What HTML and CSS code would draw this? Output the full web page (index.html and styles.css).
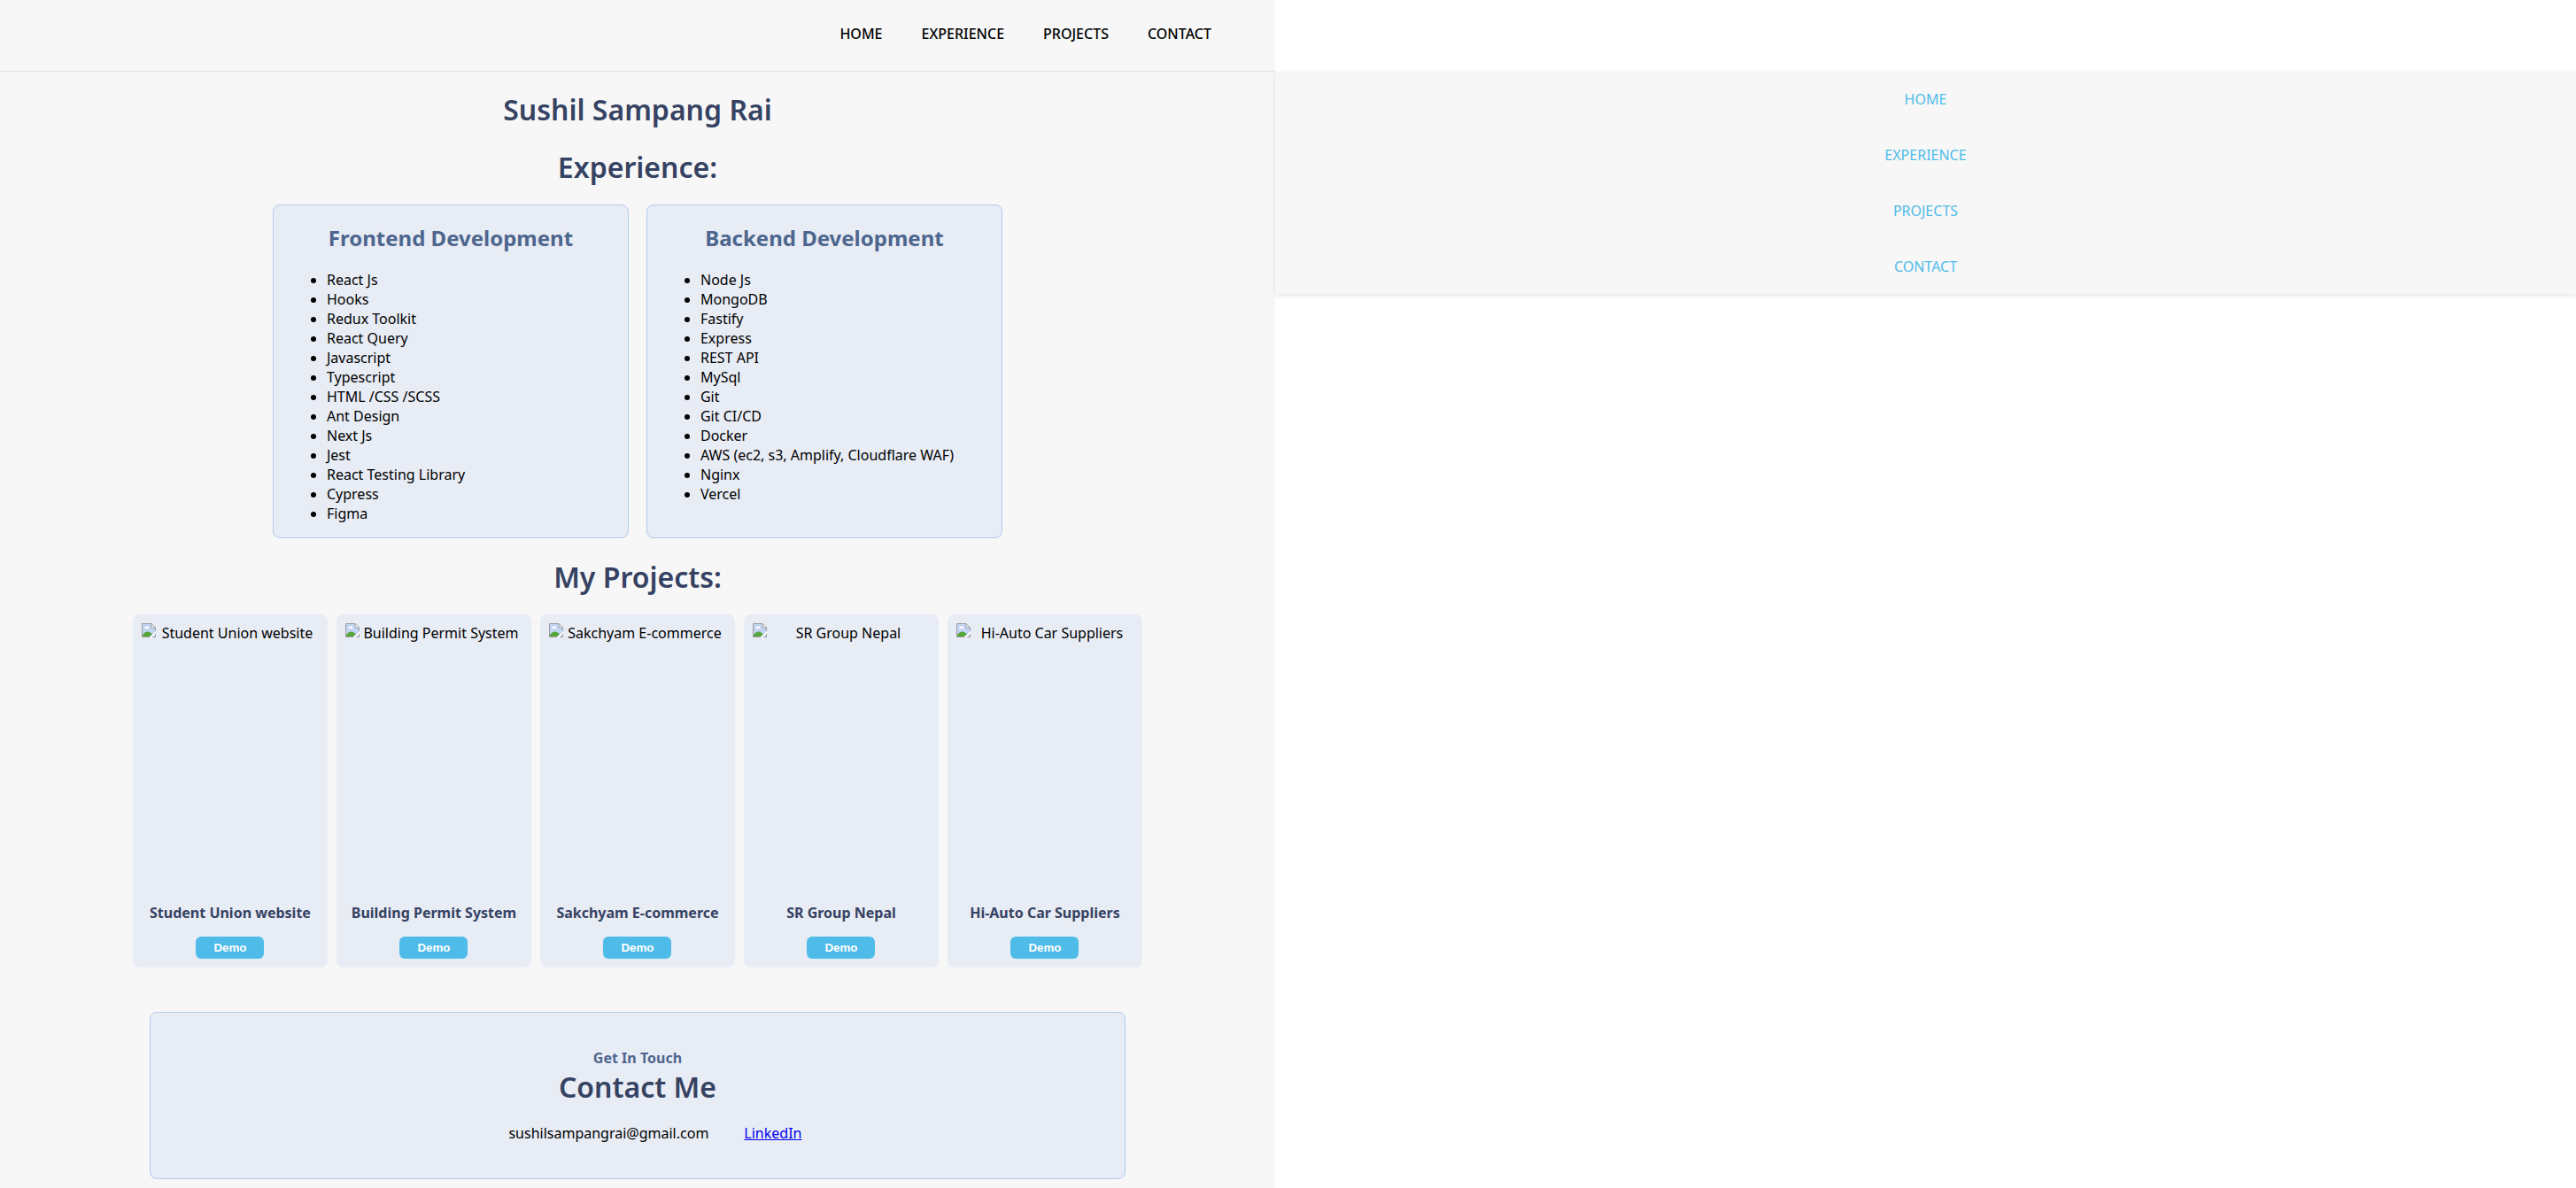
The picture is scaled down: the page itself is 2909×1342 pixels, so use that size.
FILE: index.html
```html
<!DOCTYPE html>
<html lang="en">
<head>
<meta charset="utf-8">
<meta name="viewport" content="width=device-width, initial-scale=1">
<title>Sushil Sampang Rai</title>
<link rel="stylesheet" href="styles.css">
</head>
<body>
<svg class="sprite" aria-hidden="true">
  <symbol id="missing" viewBox="0 0 16 16">
    <path d="M.5.5H11L15.500 5V15.500H.5Z" fill="#c3d5f5"/>
    <path d="M1 15V13.500C3 10 7 8.500 9.500 10.500L12 12 9 15Z" fill="#57a639"/>
    <path d="M3 6C3 4.700 4 4.300 4.700 4.300 5 2.900 7 3 7.300 4.300 8.300 4.300 8.700 5 8.700 6Z" fill="#fff"/>
    <path d="M11 .5V5H15.500Z" fill="#fff"/>
    <path d="M9 16 16 9V11.500L12 16Z" fill="#fff"/>
    <path d="M9 15.500H.5V.5H11L15.500 5V9M11 .5V5H15.500M15.500 12V15.500H12" fill="none" stroke="#9b9b9b"/>
  </symbol>
</svg>
<div class="layout">
  <div class="page">
    <header class="header">
      <nav aria-label="Main">
        <ul class="menu">
          <li><a href="#home">HOME</a></li>
          <li><a href="#experience">EXPERIENCE</a></li>
          <li><a href="#projects">PROJECTS</a></li>
          <li><a href="#contact">CONTACT</a></li>
        </ul>
      </nav>
    </header>
    <main>
      <h1 class="heading" id="home">Sushil Sampang Rai</h1>
      <section id="experience">
        <h2 class="heading">Experience:</h2>
        <div class="skills">
          <article class="skill-card">
            <h3>Frontend Development</h3>
            <ul>
              <li>React Js</li>
              <li>Hooks</li>
              <li>Redux Toolkit</li>
              <li>React Query</li>
              <li>Javascript</li>
              <li>Typescript</li>
              <li>HTML /CSS /SCSS</li>
              <li>Ant Design</li>
              <li>Next Js</li>
              <li>Jest</li>
              <li>React Testing Library</li>
              <li>Cypress</li>
              <li>Figma</li>
            </ul>
          </article>
          <article class="skill-card">
            <h3>Backend Development</h3>
            <ul>
              <li>Node Js</li>
              <li>MongoDB</li>
              <li>Fastify</li>
              <li>Express</li>
              <li>REST API</li>
              <li>MySql</li>
              <li>Git</li>
              <li>Git CI/CD</li>
              <li>Docker</li>
              <li>AWS (ec2, s3, Amplify, Cloudflare WAF)</li>
              <li>Nginx</li>
              <li>Vercel</li>
            </ul>
          </article>
        </div>
      </section>
      <section id="projects">
        <h2 class="heading">My Projects:</h2>
        <div class="projects">
          <article class="project">
            <div class="preview"><svg class="missing"><use href="#missing"/></svg><span>Student Union website</span></div>
            <h3>Student Union website</h3>
            <button type="button">Demo</button>
          </article>
          <article class="project">
            <div class="preview"><svg class="missing"><use href="#missing"/></svg><span>Building Permit System</span></div>
            <h3>Building Permit System</h3>
            <button type="button">Demo</button>
          </article>
          <article class="project">
            <div class="preview"><svg class="missing"><use href="#missing"/></svg><span>Sakchyam E-commerce</span></div>
            <h3>Sakchyam E-commerce</h3>
            <button type="button">Demo</button>
          </article>
          <article class="project">
            <div class="preview"><svg class="missing"><use href="#missing"/></svg><span>SR Group Nepal</span></div>
            <h3>SR Group Nepal</h3>
            <button type="button">Demo</button>
          </article>
          <article class="project">
            <div class="preview"><svg class="missing"><use href="#missing"/></svg><span>Hi-Auto Car Suppliers</span></div>
            <h3>Hi-Auto Car Suppliers</h3>
            <button type="button">Demo</button>
          </article>
        </div>
      </section>
      <section class="contact" id="contact">
        <p class="eyebrow">Get In Touch</p>
        <h2>Contact Me</h2>
        <ul class="contact-links">
          <li>sushilsampangrai@gmail.com</li>
          <li><a href="#linkedin">LinkedIn</a></li>
        </ul>
      </section>
    </main>
  </div>
  <nav class="drawer" aria-label="Side menu">
    <ul>
      <li><a href="#home">HOME</a></li>
      <li><a href="#experience">EXPERIENCE</a></li>
      <li><a href="#projects">PROJECTS</a></li>
      <li><a href="#contact">CONTACT</a></li>
    </ul>
  </nav>
</div>
</body>
</html>
```

FILE: styles.css
```css
* {
  box-sizing: border-box;
}

body {
  margin: 0;
  background: #fff;
  color: #000;
  font: 16px/22px "Noto Sans", sans-serif;
}

h1, h2, h3, p, ul {
  margin: 0;
  padding: 0;
}

.sprite {
  display: none;
}

.layout {
  display: grid;
  grid-template-columns: 99fr 101fr;
  align-items: start;
  overflow-x: hidden;
}

.page {
  min-height: 100vh;
  padding-bottom: 10px;
  background: #f7f7f7;
}

.header {
  padding: 27px 5% 31px;
  border-bottom: 1px solid #e0e0e0;
}

.menu {
  display: flex;
  justify-content: flex-end;
  gap: 44px;
  list-style: none;
  font-weight: 500;
}

.menu a {
  color: #000;
  text-decoration: none;
}

.heading,
.contact h2 {
  color: #354262;
  font-size: 32px;
  font-weight: 600;
  line-height: 44px;
  text-align: center;
}

.heading {
  margin: 21px 0 20px;
}

.skills {
  display: flex;
  justify-content: center;
  gap: 20px;
  margin-bottom: 22px;
}

.skill-card {
  width: 402px;
  padding: 20px 20px 16px;
  border: 1px solid #b3cbec;
  border-radius: 8px;
  background: #e8ecf5;
}

.skill-card h3 {
  margin-bottom: 20px;
  color: #4d668e;
  font-size: 24px;
  line-height: 33px;
  text-align: center;
}

.skill-card ul {
  padding-left: 40px;
}

.projects {
  display: flex;
  justify-content: center;
  gap: 10px;
}

.project {
  width: 220px;
  padding: 10px;
  border-radius: 8px;
  background: #e8ecf5;
  text-align: center;
}

.preview {
  display: flex;
  height: 300px;
}

.preview span {
  flex: 1;
  white-space: nowrap;
}

.missing {
  flex: none;
  width: 16px;
  height: 16px;
}

.project h3 {
  margin: 16px 0;
  color: #354262;
  font-size: 16px;
  white-space: nowrap;
}

.project button {
  display: block;
  margin: 0 auto;
  padding: 5px 20px;
  border: 0;
  border-radius: 6px;
  background: #4fbbe8;
  color: #fff;
  font-family: "Liberation Sans", Arial, sans-serif;
  font-weight: 700;
}

.contact {
  max-width: 1102px;
  margin: 50px auto 0;
  padding: 40px 20px;
  border: 1px solid #b3cbec;
  border-radius: 8px;
  background: #e8ecf5;
  text-align: center;
}

.eyebrow {
  color: #4d668e;
  font-weight: 700;
}

.contact-links {
  display: flex;
  justify-content: center;
  gap: 40px;
  margin-top: 19px;
  padding-left: 40px;
  list-style: none;
}

.contact-links a {
  color: #0000ee;
}

.drawer {
  margin-top: 81px;
  background: #f7f7f7;
  box-shadow: 0 2px 5px rgba(0, 0, 0, 0.1);
}

.drawer ul {
  list-style: none;
  text-align: center;
}

.drawer li {
  border-bottom: 1px solid #f4f4f4;
}

.drawer li:last-child {
  border-bottom: 0;
}

.drawer a {
  display: block;
  padding: 20px;
  color: #4fbbe8;
  text-decoration: none;
}
```
